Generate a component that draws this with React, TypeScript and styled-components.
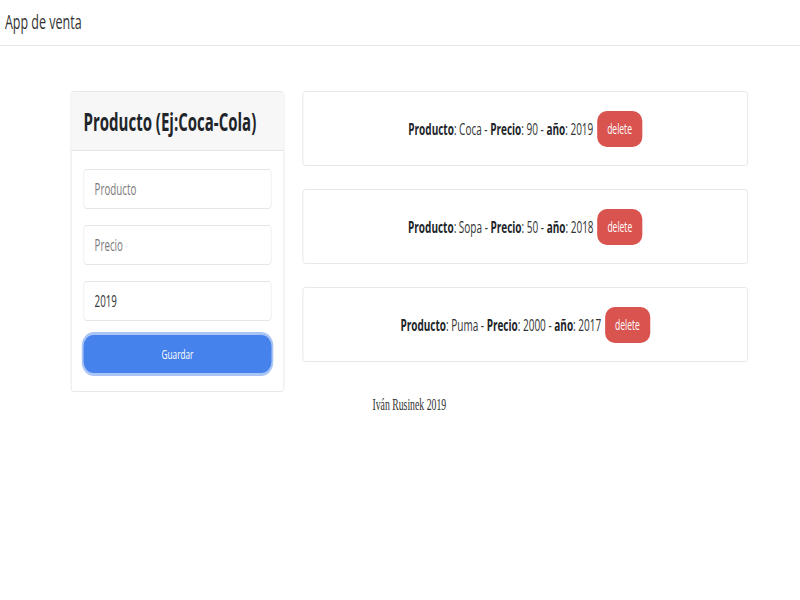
import React from "react";
import styled, { createGlobalStyle } from "styled-components";

const SCALE = 0.61;

const Global = createGlobalStyle`
  html, body { margin: 0; padding: 0; background: #fff; overflow: hidden; }
  body {
    font-family: "Open Sans", "Noto Sans", sans-serif;
    color: #212529;
  }
  * { box-sizing: border-box; }
`;

/* The reference is a horizontally squeezed render: lay out at full width, then squeeze. */
const Page = styled.div`
  width: ${Math.round(800 / SCALE)}px;
  transform: scaleX(${SCALE});
  transform-origin: 0 0;
`;

const NavBar = styled.nav`
  height: 46px;
  border-bottom: 1px solid #e5e5e5;
  display: flex;
  align-items: center;
  padding: 0 8px 4px;
`;

const Brand = styled.span`
  font-size: 20.5px;
  color: #333;
`;

const Container = styled.main`
  margin: 45px 0 0 116px;
  width: 1110px;
`;

const Row = styled.div`
  display: flex;
  gap: 30px;
  align-items: flex-start;
`;

const FormCard = styled.section`
  width: 350px;
  border: 1px solid #e3e3e3;
  border-radius: 4px;
  background: #fff;
`;

const CardHeader = styled.header`
  height: 59px;
  background: #f7f7f7;
  border-bottom: 1px solid #e3e3e3;
  display: flex;
  align-items: center;
  padding: 0 20px;
`;

const Title = styled.h2`
  margin: 0;
  font-size: 24.6px;
  font-weight: 700;
  color: #212529;
  white-space: nowrap;
`;

const FormBody = styled.form`
  padding: 18px 20px 18px;
  display: flex;
  flex-direction: column;
  gap: 16px;
`;

const Input = styled.input`
  height: 40px;
  width: 100%;
  border: 1px solid #e6e6e6;
  border-radius: 6px / 4px;
  padding: 0 17px;
  font: inherit;
  font-size: 16px;
  color: #333;
  &::placeholder { color: #7a7a7a; }
`;

const SaveButton = styled.button`
  height: 38px;
  margin-top: -2px;
  width: 100%;
  border: none;
  border-radius: 17px / 11px;
  background: #4582ec;
  box-shadow: 0 0 0 3px #a9c4f5;
  color: #fff;
  font: inherit;
  font-size: 13.5px;
`;

const List = styled.div`
  flex: 1;
  display: flex;
  flex-direction: column;
  gap: 23px;
`;

const ItemCard = styled.div`
  height: 75px;
  border: 1px solid #e3e3e3;
  border-radius: 4px;
  display: flex;
  align-items: center;
  justify-content: center;
  gap: 6px;
  font-size: 16.4px;
  color: #333;
`;

const Label = styled.b`
  color: #212529;
`;

const DeleteButton = styled.button`
  width: 74px;
  height: 36px;
  border: none;
  border-radius: 16px / 10px;
  background: #d9534f;
  color: #fff;
  font: inherit;
  font-size: 14px;
`;

const Footer = styled.footer`
  text-align: center;
  font-family: "Liberation Serif", "DejaVu Serif", serif;
  font-size: 16px;
  color: #333;
  margin-top: 4px;
`;

const products = [
  { name: "Coca", price: 90, year: 2019 },
  { name: "Sopa", price: 50, year: 2018 },
  { name: "Puma", price: 2000, year: 2017 },
];

export default function App() {
  return (
    <>
      <Global />
      <Page>
        <NavBar>
          <Brand>App de venta</Brand>
        </NavBar>
        <Container>
          <Row>
            <FormCard>
              <CardHeader>
                <Title>Producto (Ej:Coca-Cola)</Title>
              </CardHeader>
              <FormBody onSubmit={(e) => e.preventDefault()}>
                <Input placeholder="Producto" />
                <Input placeholder="Precio" />
                <Input defaultValue="2019" />
                <SaveButton type="submit">Guardar</SaveButton>
              </FormBody>
            </FormCard>
            <List>
              {products.map((p) => (
                <ItemCard key={p.name}>
                  <span>
                    <Label>Producto</Label>: {p.name} - <Label>Precio</Label>: {p.price} -{" "}
                    <Label>año</Label>: {p.year}
                  </span>
                  <DeleteButton>delete</DeleteButton>
                </ItemCard>
              ))}
            </List>
          </Row>
          <Footer>Iván Rusinek 2019</Footer>
        </Container>
      </Page>
    </>
  );
}
